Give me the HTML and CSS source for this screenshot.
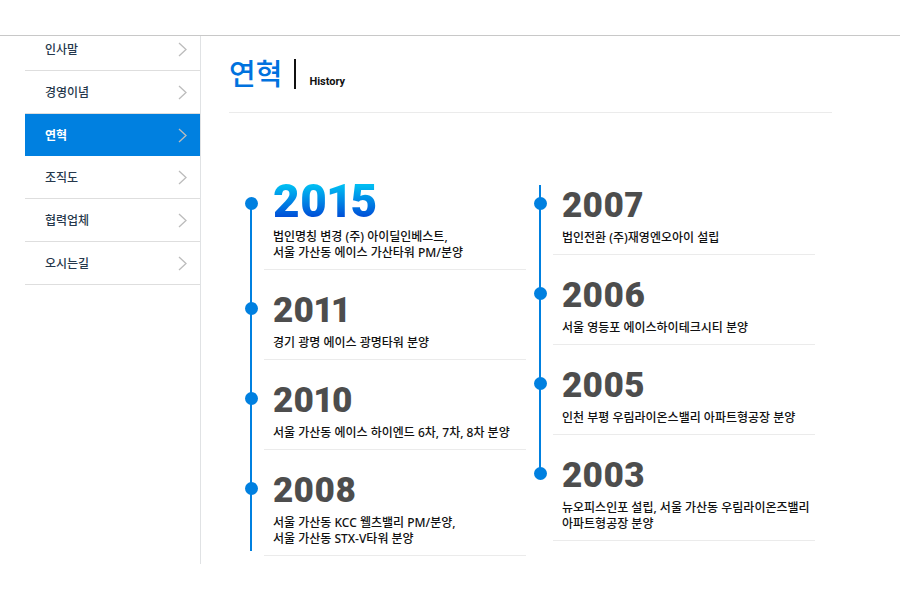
FILE: index.html
```
<!DOCTYPE html>
<html lang="ko">
<head>
<meta charset="utf-8">
<meta name="viewport" content="width=device-width, initial-scale=1">
<title>연혁</title>
<link rel="stylesheet" href="styles.css">
</head>
<body>
<header class="topbar"></header>
<div class="page">
  <nav class="sidebar">
    <a class="menu-item menu-first" href="#">인사말<svg class="chevron" viewBox="0 0 9 15"><path d="M1 1l7 6.500-7 6.500"/></svg></a>
    <a class="menu-item" href="#">경영이념<svg class="chevron" viewBox="0 0 9 15"><path d="M1 1l7 6.500-7 6.500"/></svg></a>
    <a class="menu-item menu-active" href="#" aria-current="page">연혁<svg class="chevron" viewBox="0 0 9 15"><path d="M1 1l7 6.500-7 6.500"/></svg></a>
    <a class="menu-item" href="#">조직도<svg class="chevron" viewBox="0 0 9 15"><path d="M1 1l7 6.500-7 6.500"/></svg></a>
    <a class="menu-item" href="#">협력업체<svg class="chevron" viewBox="0 0 9 15"><path d="M1 1l7 6.500-7 6.500"/></svg></a>
    <a class="menu-item" href="#">오시는길<svg class="chevron" viewBox="0 0 9 15"><path d="M1 1l7 6.500-7 6.500"/></svg></a>
  </nav>
  <main class="content">
    <div class="heading">
      <h1 class="title">연혁</h1>
      <span class="subtitle">History</span>
    </div>
    <div class="timeline">
      <section class="column column-recent">
        <article class="entry entry-featured">
          <h2 class="year">2015</h2>
          <p class="note">법인명칭 변경 (주) 아이딜인베스트,<br>서울 가산동 에이스 가산타워 PM/분양</p>
        </article>
        <article class="entry">
          <h2 class="year">2011</h2>
          <p class="note">경기 광명 에이스 광명타워 분양</p>
        </article>
        <article class="entry">
          <h2 class="year">2010</h2>
          <p class="note">서울 가산동 에이스 하이엔드 6차, 7차, 8차 분양</p>
        </article>
        <article class="entry">
          <h2 class="year">2008</h2>
          <p class="note">서울 가산동 KCC 웰츠밸리 PM/분양,<br>서울 가산동 STX-V타워 분양</p>
        </article>
      </section>
      <section class="column column-early">
        <article class="entry">
          <h2 class="year">2007</h2>
          <p class="note">법인전환 (주)재영엔오아이 설립</p>
        </article>
        <article class="entry">
          <h2 class="year">2006</h2>
          <p class="note">서울 영등포 에이스하이테크시티 분양</p>
        </article>
        <article class="entry">
          <h2 class="year">2005</h2>
          <p class="note">인천 부평 우림라이온스밸리 아파트형공장 분양</p>
        </article>
        <article class="entry">
          <h2 class="year">2003</h2>
          <p class="note">뉴오피스인포 설립, 서울 가산동 우림라이온즈밸리<br>아파트형공장 분양</p>
        </article>
      </section>
    </div>
  </main>
</div>
</body>
</html>
```
FILE: styles.css
```
* {
  box-sizing: border-box;
}

body {
  margin: 0;
  background: #fff;
  color: #111;
  font-family: "Noto Sans", "Noto Sans CJK KR", sans-serif;
  font-size: 12px;
}

h1, h2, p {
  margin: 0;
}

.topbar {
  height: 36px;
  border-bottom: 1px solid #c8c8c8;
}

.page {
  display: flex;
}

.sidebar {
  flex: 0 0 201px;
  padding-left: 25px;
  border-right: 1px solid #e0e2e4;
}

.menu-item {
  display: flex;
  align-items: center;
  justify-content: space-between;
  height: 43px;
  padding: 0 13px 0 20px;
  border-bottom: 1px solid #dedede;
  color: #26384c;
  font-weight: 500;
  text-decoration: none;
}

.menu-first {
  height: 35px;
  padding-bottom: 8px;
}

.menu-active {
  height: 42px;
  border-bottom: 0;
  background: #0080e0;
  color: #fff;
  font-weight: 700;
}

.chevron {
  width: 9px;
  height: 15px;
  fill: none;
  stroke: #bcbcbc;
  stroke-width: 1.3;
}

.content {
  flex: 1;
  padding: 0 68px 8px 28px;
}

.heading {
  display: flex;
  align-items: center;
  padding: 23px 0;
  border-bottom: 1px solid #ebebeb;
}

.title {
  padding-right: 12px;
  border-right: 2px solid #111;
  color: #0072de;
  font-size: 29px;
  font-weight: 500;
  line-height: 30px;
}

.subtitle {
  align-self: flex-end;
  margin-left: 13px;
  font-family: Roboto, sans-serif;
  font-size: 11px;
  font-weight: 700;
  line-height: 14px;
}

.timeline {
  display: grid;
  grid-template-columns: 1fr 1fr;
  align-items: start;
  gap: 13px;
  margin-top: 52px;
  padding: 0 17px 0 21px;
}

.column {
  position: relative;
  min-width: 0;
}

.column::before {
  content: "";
  position: absolute;
  left: 0;
  width: 2px;
  background: #0080e0;
}

.column-recent::before {
  top: 38px;
  bottom: 5px;
}

.column-early::before {
  top: 20px;
  bottom: 66px;
}

.entry {
  position: relative;
  margin-left: 14px;
  padding: 23px 0 8px 9px;
  border-bottom: 1px solid #ebebeb;
}

.entry::before {
  content: "";
  position: absolute;
  top: 32px;
  left: -19px;
  width: 13px;
  height: 13px;
  border-radius: 50%;
  background: #0080e0;
}

.year {
  margin-bottom: 6px;
  color: #4d4d4d;
  font-family: Roboto, sans-serif;
  font-size: 35px;
  font-weight: 900;
  font-variant-numeric: proportional-nums;
  line-height: 36px;
}

.note {
  font-weight: 500;
  line-height: 16px;
  white-space: nowrap;
}

.entry-featured {
  padding-top: 14px;
}

.entry-featured .year {
  width: max-content;
  background: linear-gradient(#00bcf2 15%, #0050d8 85%);
  background-clip: text;
  -webkit-background-clip: text;
  color: transparent;
  font-size: 46px;
  line-height: 44px;
}
```
